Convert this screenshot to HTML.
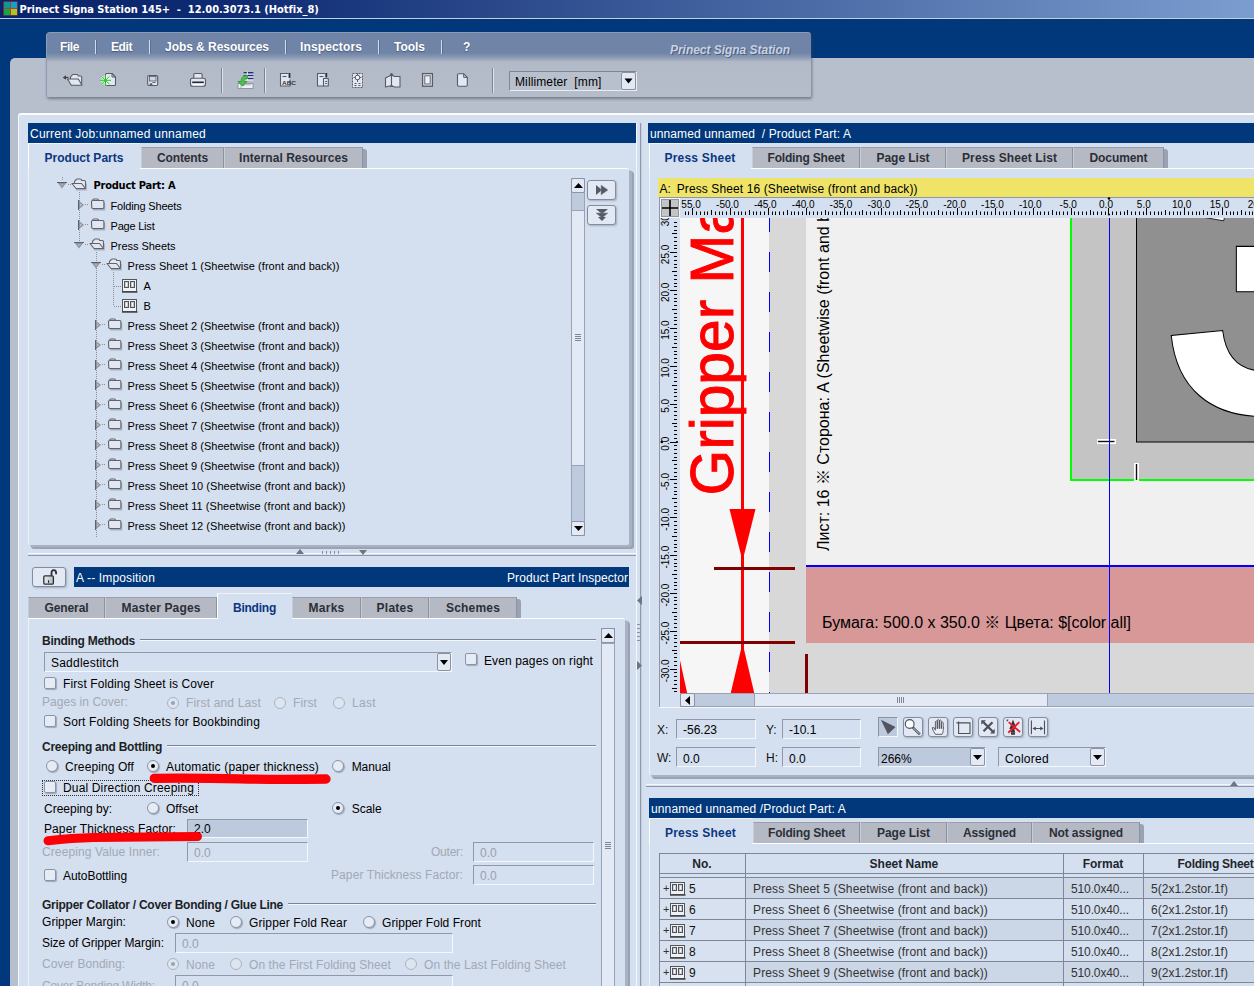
<!DOCTYPE html>
<html><head><meta charset="utf-8"><title>Prinect Signa Station</title>
<style>
html,body{margin:0;padding:0;}
body{width:1254px;height:986px;overflow:hidden;background:#00387b;font-family:"Liberation Sans",sans-serif;font-size:12px;}
#root{position:relative;width:1254px;height:986px;overflow:hidden;}
#root div,#root span.t,#root svg{position:absolute;box-sizing:border-box;}
span.t{white-space:pre;}
.hdr{background:#00387b;}
.tabi{background:#b5b9c3;border-top:1px solid #9a9eab;border-left:1px solid #c9ccd4;border-right:1px solid #8e929e;}
.inp{border:1px solid #8f98a8;border-bottom-color:#f4f7fb;border-right-color:#f4f7fb;background:#d4dfef;}
.btn{background:#e2e8f4;border:1px solid #858d9c;border-radius:3px;box-shadow:1px 1px 2px rgba(90,100,120,.4);}
.cb{width:12px;height:12px;background:#e6ecf6;border:1px solid #8d95a4;border-radius:2px;box-shadow:1px 1px 1px rgba(90,100,120,.45);}
.rb{width:12px;height:12px;background:#e6ecf6;border:1px solid #8d95a4;border-radius:50%;box-shadow:1px 1px 1px rgba(90,100,120,.45);}
.rb.on::after{content:"";position:absolute;left:3px;top:3px;width:4px;height:4px;border-radius:50%;background:#000;}
.dis.rb,.dis.cb{border-color:#aab3c2;background:#dde5f1;box-shadow:none;}
.dis.rb.on::after{background:#9aa3b2;}

</style></head>
<body>
<div id="root">
<div style="left:0px;top:0px;width:1254px;height:18px;background:linear-gradient(to right,#0a246a 0,#0d2a72 18%,#7b9dcf 100%);"></div>
<div style="left:0px;top:18px;width:1254px;height:1px;background:#c9cdd6;"></div>
<svg style="left:3px;top:1px" width="15" height="15" viewBox="0 0 15 15"><rect x="0.5" y="0.5" width="14" height="14" fill="#b04030"/><rect x="1" y="1" width="6" height="6" fill="#109890"/><rect x="8" y="1" width="6" height="6" fill="#10a0d0"/><rect x="1" y="8" width="6" height="6" fill="#10a848"/><rect x="8" y="8" width="6" height="6" fill="#a8c820"/></svg>
<span class="t" style="top:1.5px;font-size:11px;line-height:15px;color:#fff;font-family:'DejaVu Sans Condensed','DejaVu Sans',sans-serif;font-weight:bold;letter-spacing:-0.018px;left:19.5px;">Prinect Signa Station 145+  -  12.00.3073.1 (Hotfix_8)</span>
<div style="left:10px;top:58px;width:1250px;height:940px;background:#b8bfcc;border-radius:5px 0 0 0;"></div>
<div style="left:46px;top:32px;width:765px;height:65px;background:linear-gradient(to bottom,#6f84a7 0,#6f84a7 20px,#8f9db6 25px,#b3bac7 29px,#b6bdca 100%);border-radius:4px 3px 2px 2px;box-shadow:1px 2px 3px rgba(60,70,90,.55);border-top:1px solid #8a9bb8;border-left:1px solid #8d9cb7;"></div>
<span class="t" style="top:39.0px;font-size:12px;line-height:16px;color:#fff;font-weight:bold;letter-spacing:-0.418px;left:60px;text-shadow:0 1px 1px rgba(40,50,80,.5);">File</span>
<span class="t" style="top:39.0px;font-size:12px;line-height:16px;color:#fff;font-weight:bold;letter-spacing:-0.418px;left:111px;text-shadow:0 1px 1px rgba(40,50,80,.5);">Edit</span>
<span class="t" style="top:39.0px;font-size:12px;line-height:16px;color:#fff;font-weight:bold;letter-spacing:-0.045px;left:165px;text-shadow:0 1px 1px rgba(40,50,80,.5);">Jobs &amp; Resources</span>
<span class="t" style="top:39.0px;font-size:12px;line-height:16px;color:#fff;font-weight:bold;letter-spacing:0.131px;left:300px;text-shadow:0 1px 1px rgba(40,50,80,.5);">Inspectors</span>
<span class="t" style="top:39.0px;font-size:12px;line-height:16px;color:#fff;font-weight:bold;letter-spacing:-0.022px;left:394px;text-shadow:0 1px 1px rgba(40,50,80,.5);">Tools</span>
<span class="t" style="top:39.0px;font-size:12px;line-height:16px;color:#fff;font-weight:bold;left:463px;text-shadow:0 1px 1px rgba(40,50,80,.5);">?</span>
<div style="left:95px;top:40px;width:1px;height:14px;background:#d5dbe6;"></div>
<div style="left:96px;top:40px;width:1px;height:14px;background:#5c6f92;"></div>
<div style="left:149px;top:40px;width:1px;height:14px;background:#d5dbe6;"></div>
<div style="left:150px;top:40px;width:1px;height:14px;background:#5c6f92;"></div>
<div style="left:285px;top:40px;width:1px;height:14px;background:#d5dbe6;"></div>
<div style="left:286px;top:40px;width:1px;height:14px;background:#5c6f92;"></div>
<div style="left:378px;top:40px;width:1px;height:14px;background:#d5dbe6;"></div>
<div style="left:379px;top:40px;width:1px;height:14px;background:#5c6f92;"></div>
<div style="left:441px;top:40px;width:1px;height:14px;background:#d5dbe6;"></div>
<div style="left:442px;top:40px;width:1px;height:14px;background:#5c6f92;"></div>
<span class="t" style="top:42.0px;font-size:12px;line-height:16px;color:#c9d2e2;font-weight:bold;letter-spacing:-0.033px;left:670px;font-style:italic;text-shadow:1px 1px 0 rgba(50,60,90,.6);">Prinect Signa Station</span>
<div style="left:221px;top:68px;width:1px;height:25px;background:#7d8594;"></div>
<div style="left:222px;top:68px;width:1px;height:25px;background:#dfe3ea;"></div>
<div style="left:264px;top:68px;width:1px;height:25px;background:#7d8594;"></div>
<div style="left:265px;top:68px;width:1px;height:25px;background:#dfe3ea;"></div>
<div style="left:492px;top:68px;width:1px;height:25px;background:#7d8594;"></div>
<div style="left:493px;top:68px;width:1px;height:25px;background:#dfe3ea;"></div>
<svg style="left:56px;top:66px" width="424" height="30" viewBox="56 66 424 30"><path d="M62.800 77.500l3.200-2.300v4.600z" fill="#3c4048"/><path d="M65.500 77.500h3" stroke="#3c4048" stroke-width="1.200"/><path d="M70.500 79v-1.800q0-1.200 1.200-1.200q0-1.500 1.500-1.500h3.500q1.500 0 1.500 1.500h2.300q1.200 0 1.200 1.200v7" stroke="#565b66" fill="#e3e7f1" stroke-width="1.100" stroke-linejoin="round"/><path d="M67.500 79h10.800l3.700 6.300h-10.700z" stroke="#565b66" fill="#e3e7f1" stroke-width="1.100" stroke-linejoin="round"/><path d="M105.500 74.500q0-1 1-1h5.500l3.500 3.500v7.500q0 1-1 1h-8q-1 0-1-1z" stroke="#565b66" fill="#e3e7f1" stroke-width="1.100" stroke-linejoin="round"/><path d="M112 73.500v3.500h3.500" fill="none" stroke="#565b66" stroke-width="1"/><g stroke="#f2fff2" stroke-width="2.200" opacity=".7"><path d="M105.500 75v10.600M100.200 80.300h10.600M101.800 76.600l7.400 7.400M109.200 76.600l-7.400 7.400"/></g><g stroke="#22c322" stroke-width="1"><path d="M105.500 74.800v11M100 80.300h11M101.600 76.400l7.800 7.800M109.400 76.400l-7.800 7.800"/></g><rect x="147.700" y="75.500" width="10" height="10" rx="1.200" stroke="#565b66" fill="#e3e7f1" stroke-width="1.100" stroke-linejoin="round"/><rect x="149.500" y="76.500" width="6.500" height="4.500" fill="#cfd4df" stroke="#565b66" stroke-width=".8"/><rect x="149.700" y="83.300" width="2.600" height="2.200" fill="#565b66"/><path d="M152.500 82.500h3" stroke="#565b66" stroke-width=".9"/><path d="M193.800 78.500v-4q0-1 1-1h6.300q1 0 1 1v4" stroke="#565b66" fill="#e3e7f1" stroke-width="1.100" stroke-linejoin="round"/><rect x="190.500" y="78.300" width="15" height="8" rx="2" stroke="#565b66" fill="#e3e7f1" stroke-width="1.100" stroke-linejoin="round"/><path d="M192.200 82.300h11.600" stroke="#24272d" stroke-width="1.600"/><path d="M193 84.600h10" stroke="#fff" stroke-width="1.400"/><rect x="243.500" y="72" width="10" height="8.500" fill="#f4f6fa"/><path d="M243.500 72.800h10M243.500 75.600h10M243.500 78.400h10" stroke="#1c2f78" stroke-width="1.500"/><path d="M247.300 71.700v8.500" stroke="#f4f6fa" stroke-width="1"/><rect x="238" y="83.500" width="15" height="5" fill="#eef1f7" stroke="#8a909c" stroke-width=".9"/><path d="M241 83.500v4.500M251 84.800h-8" stroke="#a9aeb9" stroke-width=".9"/><path d="M247.500 75.300c-5.200 0-6.300 3.200-6.300 6.200h-3.200l4.600 4.700 4.300-4.700h-2.800c0-1.800.7-3 3.400-3z" fill="#4fc24f" stroke="#2f8a2f" stroke-width=".8" stroke-linejoin="round"/><path d="M288.500 73.500h-8v12.500h9.500v-6.500" stroke="#565b66" fill="#e3e7f1" stroke-width="1.100" stroke-linejoin="round"/><path d="M289.500 73v5" stroke="#2b2e35" stroke-width="1.800"/><path d="M282.500 76.500h4" stroke="#565b66" stroke-width="1.100"/><text x="282" y="85" font-family="Liberation Sans,sans-serif" font-size="6.200" font-weight="bold" fill="#33363d" textLength="14" lengthAdjust="spacingAndGlyphs">ABC</text><path d="M325 73.500h-7.500v12.500h6" stroke="#565b66" fill="#e3e7f1" stroke-width="1.100" stroke-linejoin="round"/><path d="M326.300 73v4.300" stroke="#2b2e35" stroke-width="1.800"/><path d="M319.500 76.500h4" stroke="#565b66" stroke-width="1.100"/><rect x="323.500" y="78.500" width="4.800" height="7.500" stroke="#565b66" fill="#e3e7f1" stroke-width="1.100" stroke-linejoin="round"/><path d="M325 81.500h2M325 83.500h2" stroke="#565b66" stroke-width=".9"/><rect x="352.500" y="73.500" width="10" height="14" fill="#e3e7f1" stroke="#565b66" stroke-width="1" stroke-dasharray="2 1"/><circle cx="357.500" cy="77.500" r="2.300" fill="#f6f8fb" stroke="#565b66" stroke-width="1"/><path d="M357.500 73.500v2M357.500 79.500v2.500M353.500 77.500h2M359.500 77.500h2M354.500 83.500h2M358.500 83.500h2M354.500 85.500h2M358.500 85.500h2" stroke="#565b66" stroke-width="1"/><path d="M385.500 78l6-3v10.500l-6 1.500z" stroke="#565b66" fill="#e3e7f1" stroke-width="1.100" stroke-linejoin="round"/><path d="M391.500 75l3 1.500h5.500v10.500h-5.500l-3-1.500z" stroke="#565b66" fill="#e3e7f1" stroke-width="1.100" stroke-linejoin="round"/><path d="M391.500 76v9.500" stroke="#565b66" stroke-width="1" stroke-dasharray="1.500 1.500"/><path d="M390 75l1.500-2 1.500 2zM390 86.500h3" stroke="#565b66" stroke-width=".8" fill="#565b66"/><rect x="422.600" y="73.600" width="9.800" height="12.600" fill="#e3e7f1" stroke="#565b66" stroke-width="1.300"/><rect x="424.800" y="75.800" width="5.400" height="8.200" fill="#eef1f7" stroke="#565b66" stroke-width=".9"/><path d="M457.500 75q0-1.200 1.200-1.200h5l3.600 3.600v7.600q0 1.200-1.200 1.200h-7.400q-1.200 0-1.200-1.200z" stroke="#565b66" fill="#e3e7f1" stroke-width="1.100" stroke-linejoin="round"/><path d="M463.700 73.800v3.600h3.600" fill="none" stroke="#565b66" stroke-width="1"/></svg>
<div style="left:509px;top:71px;width:128px;height:20px;background:#b9c0cd;border:1px solid #7e8695;border-right-color:#e8ecf2;border-bottom-color:#e8ecf2;"></div>
<span class="t" style="top:73.5px;font-size:12px;line-height:16px;color:#000;letter-spacing:0.114px;left:515px;">Millimeter  [mm]</span>
<div style="left:621px;top:72px;width:15px;height:18px;background:#e2e8f4;border:1px solid #8a92a2;border-radius:2px;"></div>
<svg style="left:624px;top:78px" width="9" height="6"><path d="M0.5 0.5h8l-4 5z" fill="#000"/></svg>
<div style="left:18px;top:113px;width:1240px;height:880px;background:#d4dfef;border-top:2px solid #fafcff;border-left:1px solid #f6f9fd;border-radius:3px 0 0 0;"></div>
<div style="left:28px;top:123px;width:608px;height:20px;background:#00387b;"></div>
<span class="t" style="top:125.8px;font-size:12px;line-height:16px;color:#fff;letter-spacing:0.242px;left:30px;">Current Job:unnamed unnamed</span>
<div style="left:31px;top:171px;width:603px;height:378px;background:#9aa3b4;border-radius:0 4px 3px 3px;"></div>
<div style="left:30px;top:170px;width:602px;height:377px;background:#a9b2c3;border-radius:0 4px 3px 3px;"></div>
<div style="left:28px;top:168px;width:601px;height:377px;background:#d4dfef;border-top:1px solid #fff;border-left:1px solid #eef3fa;border-radius:0 3px 2px 2px;"></div>
<div style="left:29px;top:168px;width:111px;height:1px;background:#d4dfef;"></div>
<div style="left:28px;top:143px;width:112px;height:26px;background:#d4dfef;border-left:1px solid #fff;border-top:1px solid #eef3fa;"></div>
<span class="t" style="top:149.5px;font-size:12px;line-height:16px;color:#0b3680;font-weight:bold;letter-spacing:0.024px;left:44.5px;">Product Parts</span>
<div class="tabi" style="left:141px;top:147px;width:83px;height:21px;"></div>
<span class="t" style="top:149.5px;font-size:12px;line-height:16px;color:#2b2f38;font-weight:bold;letter-spacing:-0.125px;left:157.0px;">Contents</span>
<div class="tabi" style="left:224px;top:147px;width:139px;height:21px;"></div>
<span class="t" style="top:149.5px;font-size:12px;line-height:16px;color:#2b2f38;font-weight:bold;letter-spacing:0.053px;left:239.0px;">Internal Resources</span>
<div style="left:363px;top:149px;width:4px;height:19px;background:#9aa3b4;border-radius:0 3px 0 0;"></div>
<div style="left:62px;top:177px;width:1px;height:4px;background:repeating-linear-gradient(to bottom,#8a909c 0,#8a909c 1px,transparent 1px,transparent 2px);"></div>
<div style="left:79px;top:192px;width:1px;height:51px;background:repeating-linear-gradient(to bottom,#8a909c 0,#8a909c 1px,transparent 1px,transparent 2px);"></div>
<div style="left:96px;top:252px;width:1px;height:285px;background:repeating-linear-gradient(to bottom,#8a909c 0,#8a909c 1px,transparent 1px,transparent 2px);"></div>
<div style="left:113px;top:272px;width:1px;height:34px;background:repeating-linear-gradient(to bottom,#8a909c 0,#8a909c 1px,transparent 1px,transparent 2px);"></div>
<svg style="left:57px;top:182px" width="10" height="7" viewBox="0 0 10 7"><path d="M0.500 0.500h9l-4.500 6z" fill="#8d929d"/><path d="M0 0.500h10" stroke="#5d616b" stroke-width="1"/><path d="M3.200 2h3.600l-1.800 2.500z" fill="#a8adb8"/></svg>
<svg style="left:70.5px;top:178px" width="17" height="13" viewBox="0 0 17 13"><path d="M5 11.800h10v-6" stroke="#a4adbf" stroke-width="1.400" fill="none"/><path d="M3.500 5v-1.300q0-1.200 1.200-1.200q0-1.500 1.500-1.500h3q1.500 0 1.500 1.500h2.600q1.200 0 1.200 1.200v6" fill="#e2e6f1" stroke="#5f636d" stroke-width="1.100"/><path d="M1 5.500h9.500l4 5h-9.500z" fill="#e2e6f1" stroke="#5f636d" stroke-width="1.100" stroke-linejoin="round"/></svg>
<div style="left:68px;top:184px;width:3px;height:1px;background:repeating-linear-gradient(to right,#8a909c 0,#8a909c 1px,transparent 1px,transparent 2px);"></div>
<span class="t" style="top:178.0px;font-size:11px;line-height:15px;color:#000;font-family:'DejaVu Sans Condensed','DejaVu Sans',sans-serif;font-weight:bold;letter-spacing:-0.228px;left:93.5px;">Product Part: A</span>
<svg style="left:78px;top:200px" width="7" height="10" viewBox="0 0 7 10"><path d="M0.500 0.500v9l5.500-4.500z" fill="#8d929d"/><path d="M0.500 0v10" stroke="#5d616b" stroke-width="1"/><path d="M2 3.200v3.600l2.200-1.800z" fill="#b9bec9"/></svg>
<svg style="left:90.0px;top:198px" width="16" height="13" viewBox="0 0 16 13"><path d="M3 11.700h11.500v-7" stroke="#a4adbf" stroke-width="1.400" fill="none"/><path d="M1.500 3.700q0-1.200 1.200-1.200q0-1.500 1.200-1.500h3.400q1.200 0 1.200 1.500h4.200q1.200 0 1.200 1.200v5.600q0 1.200-1.200 1.200h-9.800q-1.200 0-1.200-1.200z" fill="#e2e6f1" stroke="#5f636d" stroke-width="1.100"/><path d="M3 2.500h6" stroke="#5f636d" stroke-width="1"/></svg>
<div style="left:85px;top:204px;width:4px;height:1px;background:repeating-linear-gradient(to right,#8a909c 0,#8a909c 1px,transparent 1px,transparent 2px);"></div>
<span class="t" style="top:198.5px;font-size:11px;line-height:15px;color:#000;letter-spacing:-0.171px;left:110.5px;">Folding Sheets</span>
<svg style="left:78px;top:220px" width="7" height="10" viewBox="0 0 7 10"><path d="M0.500 0.500v9l5.500-4.500z" fill="#8d929d"/><path d="M0.500 0v10" stroke="#5d616b" stroke-width="1"/><path d="M2 3.200v3.600l2.200-1.800z" fill="#b9bec9"/></svg>
<svg style="left:90.0px;top:218px" width="16" height="13" viewBox="0 0 16 13"><path d="M3 11.700h11.500v-7" stroke="#a4adbf" stroke-width="1.400" fill="none"/><path d="M1.500 3.700q0-1.200 1.200-1.200q0-1.500 1.200-1.500h3.400q1.200 0 1.200 1.500h4.200q1.200 0 1.200 1.200v5.600q0 1.200-1.200 1.200h-9.800q-1.200 0-1.200-1.200z" fill="#e2e6f1" stroke="#5f636d" stroke-width="1.100"/><path d="M3 2.500h6" stroke="#5f636d" stroke-width="1"/></svg>
<div style="left:85px;top:224px;width:4px;height:1px;background:repeating-linear-gradient(to right,#8a909c 0,#8a909c 1px,transparent 1px,transparent 2px);"></div>
<span class="t" style="top:218.5px;font-size:11px;line-height:15px;color:#000;letter-spacing:-0.208px;left:110.5px;">Page List</span>
<svg style="left:74px;top:242px" width="10" height="7" viewBox="0 0 10 7"><path d="M0.500 0.500h9l-4.500 6z" fill="#8d929d"/><path d="M0 0.500h10" stroke="#5d616b" stroke-width="1"/><path d="M3.200 2h3.600l-1.800 2.500z" fill="#a8adb8"/></svg>
<svg style="left:89.0px;top:238px" width="17" height="13" viewBox="0 0 17 13"><path d="M5 11.800h10v-6" stroke="#a4adbf" stroke-width="1.400" fill="none"/><path d="M3.500 5v-1.300q0-1.200 1.200-1.200q0-1.500 1.500-1.500h3q1.500 0 1.500 1.500h2.600q1.200 0 1.200 1.200v6" fill="#e2e6f1" stroke="#5f636d" stroke-width="1.100"/><path d="M1 5.500h9.500l4 5h-9.500z" fill="#e2e6f1" stroke="#5f636d" stroke-width="1.100" stroke-linejoin="round"/></svg>
<div style="left:85px;top:244px;width:3px;height:1px;background:repeating-linear-gradient(to right,#8a909c 0,#8a909c 1px,transparent 1px,transparent 2px);"></div>
<span class="t" style="top:238.5px;font-size:11px;line-height:15px;color:#000;letter-spacing:-0.035px;left:110.5px;">Press Sheets</span>
<svg style="left:91px;top:262px" width="10" height="7" viewBox="0 0 10 7"><path d="M0.500 0.500h9l-4.500 6z" fill="#8d929d"/><path d="M0 0.500h10" stroke="#5d616b" stroke-width="1"/><path d="M3.200 2h3.600l-1.800 2.500z" fill="#a8adb8"/></svg>
<svg style="left:106.0px;top:258px" width="17" height="13" viewBox="0 0 17 13"><path d="M5 11.800h10v-6" stroke="#a4adbf" stroke-width="1.400" fill="none"/><path d="M3.500 5v-1.300q0-1.200 1.200-1.200q0-1.500 1.500-1.500h3q1.500 0 1.500 1.500h2.600q1.200 0 1.200 1.200v6" fill="#e2e6f1" stroke="#5f636d" stroke-width="1.100"/><path d="M1 5.500h9.500l4 5h-9.500z" fill="#e2e6f1" stroke="#5f636d" stroke-width="1.100" stroke-linejoin="round"/></svg>
<div style="left:102px;top:264px;width:3px;height:1px;background:repeating-linear-gradient(to right,#8a909c 0,#8a909c 1px,transparent 1px,transparent 2px);"></div>
<span class="t" style="top:258.5px;font-size:11px;line-height:15px;color:#000;letter-spacing:0.040px;left:127.5px;">Press Sheet 1 (Sheetwise (front and back))</span>
<div style="left:114px;top:286px;width:8px;height:1px;background:repeating-linear-gradient(to right,#8a909c 0,#8a909c 1px,transparent 1px,transparent 2px);"></div>
<svg style="left:122px;top:279px" width="16" height="14" viewBox="0 0 16 14"><rect x="0.500" y="0.500" width="14" height="12" fill="#eef2f8" stroke="#555"/><path d="M0 13h15.500" stroke="#444" stroke-width="1.500"/><rect x="2.500" y="2.500" width="4" height="6" fill="#c8ccd6" stroke="#555"/><rect x="8.500" y="2.500" width="4" height="6" fill="#c8ccd6" stroke="#555"/><path d="M4.500 4v3M10.500 4v3" stroke="#fff"/></svg>
<span class="t" style="top:278.5px;font-size:11px;line-height:15px;color:#000;letter-spacing:-0.344px;left:143.5px;">A</span>
<div style="left:114px;top:306px;width:8px;height:1px;background:repeating-linear-gradient(to right,#8a909c 0,#8a909c 1px,transparent 1px,transparent 2px);"></div>
<svg style="left:122px;top:299px" width="16" height="14" viewBox="0 0 16 14"><rect x="0.500" y="0.500" width="14" height="12" fill="#eef2f8" stroke="#555"/><path d="M0 13h15.500" stroke="#444" stroke-width="1.500"/><rect x="2.500" y="2.500" width="4" height="6" fill="#c8ccd6" stroke="#555"/><rect x="8.500" y="2.500" width="4" height="6" fill="#c8ccd6" stroke="#555"/><path d="M4.500 4v3M10.500 4v3" stroke="#fff"/></svg>
<span class="t" style="top:298.5px;font-size:11px;line-height:15px;color:#000;letter-spacing:-0.344px;left:143.5px;">B</span>
<svg style="left:95px;top:320px" width="7" height="10" viewBox="0 0 7 10"><path d="M0.500 0.500v9l5.500-4.500z" fill="#8d929d"/><path d="M0.500 0v10" stroke="#5d616b" stroke-width="1"/><path d="M2 3.200v3.600l2.200-1.800z" fill="#b9bec9"/></svg>
<svg style="left:107.0px;top:318px" width="16" height="13" viewBox="0 0 16 13"><path d="M3 11.700h11.500v-7" stroke="#a4adbf" stroke-width="1.400" fill="none"/><path d="M1.500 3.700q0-1.200 1.200-1.200q0-1.500 1.200-1.500h3.400q1.200 0 1.200 1.500h4.200q1.200 0 1.200 1.200v5.600q0 1.200-1.200 1.200h-9.800q-1.200 0-1.200-1.200z" fill="#e2e6f1" stroke="#5f636d" stroke-width="1.100"/><path d="M3 2.500h6" stroke="#5f636d" stroke-width="1"/></svg>
<div style="left:102px;top:324px;width:4px;height:1px;background:repeating-linear-gradient(to right,#8a909c 0,#8a909c 1px,transparent 1px,transparent 2px);"></div>
<span class="t" style="top:318.5px;font-size:11px;line-height:15px;color:#000;letter-spacing:0.040px;left:127.5px;">Press Sheet 2 (Sheetwise (front and back))</span>
<svg style="left:95px;top:340px" width="7" height="10" viewBox="0 0 7 10"><path d="M0.500 0.500v9l5.500-4.500z" fill="#8d929d"/><path d="M0.500 0v10" stroke="#5d616b" stroke-width="1"/><path d="M2 3.200v3.600l2.200-1.800z" fill="#b9bec9"/></svg>
<svg style="left:107.0px;top:338px" width="16" height="13" viewBox="0 0 16 13"><path d="M3 11.700h11.500v-7" stroke="#a4adbf" stroke-width="1.400" fill="none"/><path d="M1.500 3.700q0-1.200 1.200-1.200q0-1.500 1.200-1.500h3.400q1.200 0 1.200 1.500h4.200q1.200 0 1.200 1.200v5.600q0 1.200-1.200 1.200h-9.800q-1.200 0-1.200-1.200z" fill="#e2e6f1" stroke="#5f636d" stroke-width="1.100"/><path d="M3 2.500h6" stroke="#5f636d" stroke-width="1"/></svg>
<div style="left:102px;top:344px;width:4px;height:1px;background:repeating-linear-gradient(to right,#8a909c 0,#8a909c 1px,transparent 1px,transparent 2px);"></div>
<span class="t" style="top:338.5px;font-size:11px;line-height:15px;color:#000;letter-spacing:0.040px;left:127.5px;">Press Sheet 3 (Sheetwise (front and back))</span>
<svg style="left:95px;top:360px" width="7" height="10" viewBox="0 0 7 10"><path d="M0.500 0.500v9l5.500-4.500z" fill="#8d929d"/><path d="M0.500 0v10" stroke="#5d616b" stroke-width="1"/><path d="M2 3.200v3.600l2.200-1.800z" fill="#b9bec9"/></svg>
<svg style="left:107.0px;top:358px" width="16" height="13" viewBox="0 0 16 13"><path d="M3 11.700h11.500v-7" stroke="#a4adbf" stroke-width="1.400" fill="none"/><path d="M1.500 3.700q0-1.200 1.200-1.200q0-1.500 1.200-1.500h3.400q1.200 0 1.200 1.500h4.200q1.200 0 1.200 1.200v5.600q0 1.200-1.200 1.200h-9.800q-1.200 0-1.200-1.200z" fill="#e2e6f1" stroke="#5f636d" stroke-width="1.100"/><path d="M3 2.500h6" stroke="#5f636d" stroke-width="1"/></svg>
<div style="left:102px;top:364px;width:4px;height:1px;background:repeating-linear-gradient(to right,#8a909c 0,#8a909c 1px,transparent 1px,transparent 2px);"></div>
<span class="t" style="top:358.5px;font-size:11px;line-height:15px;color:#000;letter-spacing:0.040px;left:127.5px;">Press Sheet 4 (Sheetwise (front and back))</span>
<svg style="left:95px;top:380px" width="7" height="10" viewBox="0 0 7 10"><path d="M0.500 0.500v9l5.500-4.500z" fill="#8d929d"/><path d="M0.500 0v10" stroke="#5d616b" stroke-width="1"/><path d="M2 3.200v3.600l2.200-1.800z" fill="#b9bec9"/></svg>
<svg style="left:107.0px;top:378px" width="16" height="13" viewBox="0 0 16 13"><path d="M3 11.700h11.500v-7" stroke="#a4adbf" stroke-width="1.400" fill="none"/><path d="M1.500 3.700q0-1.200 1.200-1.200q0-1.500 1.200-1.500h3.400q1.200 0 1.200 1.500h4.200q1.200 0 1.200 1.200v5.600q0 1.200-1.200 1.200h-9.800q-1.200 0-1.200-1.200z" fill="#e2e6f1" stroke="#5f636d" stroke-width="1.100"/><path d="M3 2.500h6" stroke="#5f636d" stroke-width="1"/></svg>
<div style="left:102px;top:384px;width:4px;height:1px;background:repeating-linear-gradient(to right,#8a909c 0,#8a909c 1px,transparent 1px,transparent 2px);"></div>
<span class="t" style="top:378.5px;font-size:11px;line-height:15px;color:#000;letter-spacing:0.040px;left:127.5px;">Press Sheet 5 (Sheetwise (front and back))</span>
<svg style="left:95px;top:400px" width="7" height="10" viewBox="0 0 7 10"><path d="M0.500 0.500v9l5.500-4.500z" fill="#8d929d"/><path d="M0.500 0v10" stroke="#5d616b" stroke-width="1"/><path d="M2 3.200v3.600l2.200-1.800z" fill="#b9bec9"/></svg>
<svg style="left:107.0px;top:398px" width="16" height="13" viewBox="0 0 16 13"><path d="M3 11.700h11.500v-7" stroke="#a4adbf" stroke-width="1.400" fill="none"/><path d="M1.500 3.700q0-1.200 1.200-1.200q0-1.500 1.200-1.500h3.400q1.200 0 1.200 1.500h4.200q1.200 0 1.200 1.200v5.600q0 1.200-1.200 1.200h-9.800q-1.200 0-1.200-1.200z" fill="#e2e6f1" stroke="#5f636d" stroke-width="1.100"/><path d="M3 2.500h6" stroke="#5f636d" stroke-width="1"/></svg>
<div style="left:102px;top:404px;width:4px;height:1px;background:repeating-linear-gradient(to right,#8a909c 0,#8a909c 1px,transparent 1px,transparent 2px);"></div>
<span class="t" style="top:398.5px;font-size:11px;line-height:15px;color:#000;letter-spacing:0.040px;left:127.5px;">Press Sheet 6 (Sheetwise (front and back))</span>
<svg style="left:95px;top:420px" width="7" height="10" viewBox="0 0 7 10"><path d="M0.500 0.500v9l5.500-4.500z" fill="#8d929d"/><path d="M0.500 0v10" stroke="#5d616b" stroke-width="1"/><path d="M2 3.200v3.600l2.200-1.800z" fill="#b9bec9"/></svg>
<svg style="left:107.0px;top:418px" width="16" height="13" viewBox="0 0 16 13"><path d="M3 11.700h11.500v-7" stroke="#a4adbf" stroke-width="1.400" fill="none"/><path d="M1.500 3.700q0-1.200 1.200-1.200q0-1.500 1.200-1.500h3.400q1.200 0 1.200 1.500h4.200q1.200 0 1.200 1.200v5.600q0 1.200-1.200 1.200h-9.800q-1.200 0-1.200-1.200z" fill="#e2e6f1" stroke="#5f636d" stroke-width="1.100"/><path d="M3 2.500h6" stroke="#5f636d" stroke-width="1"/></svg>
<div style="left:102px;top:424px;width:4px;height:1px;background:repeating-linear-gradient(to right,#8a909c 0,#8a909c 1px,transparent 1px,transparent 2px);"></div>
<span class="t" style="top:418.5px;font-size:11px;line-height:15px;color:#000;letter-spacing:0.040px;left:127.5px;">Press Sheet 7 (Sheetwise (front and back))</span>
<svg style="left:95px;top:440px" width="7" height="10" viewBox="0 0 7 10"><path d="M0.500 0.500v9l5.500-4.500z" fill="#8d929d"/><path d="M0.500 0v10" stroke="#5d616b" stroke-width="1"/><path d="M2 3.200v3.600l2.200-1.800z" fill="#b9bec9"/></svg>
<svg style="left:107.0px;top:438px" width="16" height="13" viewBox="0 0 16 13"><path d="M3 11.700h11.500v-7" stroke="#a4adbf" stroke-width="1.400" fill="none"/><path d="M1.500 3.700q0-1.200 1.200-1.200q0-1.500 1.200-1.500h3.400q1.200 0 1.200 1.500h4.200q1.200 0 1.200 1.200v5.600q0 1.200-1.200 1.200h-9.800q-1.200 0-1.200-1.200z" fill="#e2e6f1" stroke="#5f636d" stroke-width="1.100"/><path d="M3 2.500h6" stroke="#5f636d" stroke-width="1"/></svg>
<div style="left:102px;top:444px;width:4px;height:1px;background:repeating-linear-gradient(to right,#8a909c 0,#8a909c 1px,transparent 1px,transparent 2px);"></div>
<span class="t" style="top:438.5px;font-size:11px;line-height:15px;color:#000;letter-spacing:0.040px;left:127.5px;">Press Sheet 8 (Sheetwise (front and back))</span>
<svg style="left:95px;top:460px" width="7" height="10" viewBox="0 0 7 10"><path d="M0.500 0.500v9l5.500-4.500z" fill="#8d929d"/><path d="M0.500 0v10" stroke="#5d616b" stroke-width="1"/><path d="M2 3.200v3.600l2.200-1.800z" fill="#b9bec9"/></svg>
<svg style="left:107.0px;top:458px" width="16" height="13" viewBox="0 0 16 13"><path d="M3 11.700h11.500v-7" stroke="#a4adbf" stroke-width="1.400" fill="none"/><path d="M1.500 3.700q0-1.200 1.200-1.200q0-1.500 1.200-1.500h3.400q1.200 0 1.200 1.500h4.200q1.200 0 1.200 1.200v5.600q0 1.200-1.200 1.200h-9.800q-1.200 0-1.200-1.200z" fill="#e2e6f1" stroke="#5f636d" stroke-width="1.100"/><path d="M3 2.500h6" stroke="#5f636d" stroke-width="1"/></svg>
<div style="left:102px;top:464px;width:4px;height:1px;background:repeating-linear-gradient(to right,#8a909c 0,#8a909c 1px,transparent 1px,transparent 2px);"></div>
<span class="t" style="top:458.5px;font-size:11px;line-height:15px;color:#000;letter-spacing:0.040px;left:127.5px;">Press Sheet 9 (Sheetwise (front and back))</span>
<svg style="left:95px;top:480px" width="7" height="10" viewBox="0 0 7 10"><path d="M0.500 0.500v9l5.500-4.500z" fill="#8d929d"/><path d="M0.500 0v10" stroke="#5d616b" stroke-width="1"/><path d="M2 3.200v3.600l2.200-1.800z" fill="#b9bec9"/></svg>
<svg style="left:107.0px;top:478px" width="16" height="13" viewBox="0 0 16 13"><path d="M3 11.700h11.500v-7" stroke="#a4adbf" stroke-width="1.400" fill="none"/><path d="M1.500 3.700q0-1.200 1.200-1.200q0-1.500 1.200-1.500h3.400q1.200 0 1.200 1.500h4.200q1.200 0 1.200 1.200v5.600q0 1.200-1.200 1.200h-9.800q-1.200 0-1.200-1.200z" fill="#e2e6f1" stroke="#5f636d" stroke-width="1.100"/><path d="M3 2.500h6" stroke="#5f636d" stroke-width="1"/></svg>
<div style="left:102px;top:484px;width:4px;height:1px;background:repeating-linear-gradient(to right,#8a909c 0,#8a909c 1px,transparent 1px,transparent 2px);"></div>
<span class="t" style="top:478.5px;font-size:11px;line-height:15px;color:#000;letter-spacing:0.036px;left:127.5px;">Press Sheet 10 (Sheetwise (front and back))</span>
<svg style="left:95px;top:500px" width="7" height="10" viewBox="0 0 7 10"><path d="M0.500 0.500v9l5.500-4.500z" fill="#8d929d"/><path d="M0.500 0v10" stroke="#5d616b" stroke-width="1"/><path d="M2 3.200v3.600l2.200-1.800z" fill="#b9bec9"/></svg>
<svg style="left:107.0px;top:498px" width="16" height="13" viewBox="0 0 16 13"><path d="M3 11.700h11.500v-7" stroke="#a4adbf" stroke-width="1.400" fill="none"/><path d="M1.500 3.700q0-1.200 1.200-1.200q0-1.500 1.200-1.500h3.400q1.200 0 1.200 1.500h4.200q1.200 0 1.200 1.200v5.600q0 1.200-1.200 1.200h-9.800q-1.200 0-1.200-1.200z" fill="#e2e6f1" stroke="#5f636d" stroke-width="1.100"/><path d="M3 2.500h6" stroke="#5f636d" stroke-width="1"/></svg>
<div style="left:102px;top:504px;width:4px;height:1px;background:repeating-linear-gradient(to right,#8a909c 0,#8a909c 1px,transparent 1px,transparent 2px);"></div>
<span class="t" style="top:498.5px;font-size:11px;line-height:15px;color:#000;letter-spacing:0.055px;left:127.5px;">Press Sheet 11 (Sheetwise (front and back))</span>
<svg style="left:95px;top:520px" width="7" height="10" viewBox="0 0 7 10"><path d="M0.500 0.500v9l5.500-4.500z" fill="#8d929d"/><path d="M0.500 0v10" stroke="#5d616b" stroke-width="1"/><path d="M2 3.200v3.600l2.200-1.800z" fill="#b9bec9"/></svg>
<svg style="left:107.0px;top:518px" width="16" height="13" viewBox="0 0 16 13"><path d="M3 11.700h11.500v-7" stroke="#a4adbf" stroke-width="1.400" fill="none"/><path d="M1.500 3.700q0-1.200 1.200-1.200q0-1.500 1.200-1.500h3.400q1.200 0 1.200 1.500h4.200q1.200 0 1.200 1.200v5.600q0 1.200-1.200 1.200h-9.800q-1.200 0-1.200-1.200z" fill="#e2e6f1" stroke="#5f636d" stroke-width="1.100"/><path d="M3 2.500h6" stroke="#5f636d" stroke-width="1"/></svg>
<div style="left:102px;top:524px;width:4px;height:1px;background:repeating-linear-gradient(to right,#8a909c 0,#8a909c 1px,transparent 1px,transparent 2px);"></div>
<span class="t" style="top:518.5px;font-size:11px;line-height:15px;color:#000;letter-spacing:0.036px;left:127.5px;">Press Sheet 12 (Sheetwise (front and back))</span>
<div style="left:571px;top:178px;width:14px;height:358px;background:#becadd;border:1px solid #9aa3b4;"></div>
<div style="left:571px;top:210px;width:14px;height:256px;background:#e3e9f5;border:1px solid #9aa3b4;"></div>
<div style="left:575px;top:334px;width:6px;height:1px;background:#7f8796;"></div>
<div style="left:575px;top:336px;width:6px;height:1px;background:#7f8796;"></div>
<div style="left:575px;top:338px;width:6px;height:1px;background:#7f8796;"></div>
<div style="left:575px;top:340px;width:6px;height:1px;background:#7f8796;"></div>
<div style="left:571px;top:178px;width:14px;height:15px;background:#e3e9f5;border:1px solid #8a93a4;border-radius:2px;"></div>
<svg style="left:574px;top:183px" width="9" height="5"><path d="M0 5h9l-4.500-5z" fill="#000"/></svg>
<div style="left:571px;top:521px;width:14px;height:15px;background:#e3e9f5;border:1px solid #8a93a4;border-radius:2px;"></div>
<svg style="left:574px;top:526px" width="9" height="5"><path d="M0 0h9l-4.500 5z" fill="#000"/></svg>
<div class="btn" style="left:587px;top:180px;width:29px;height:20px;"></div>
<svg style="left:595px;top:184px" width="14" height="12" viewBox="0 0 14 12"><path d="M1 1l6 5-6 5z" fill="#555b66"/><path d="M6 1l7 5-7 5z" fill="#555b66" stroke="#8a909c" stroke-width=".5"/></svg>
<div class="btn" style="left:587px;top:205px;width:29px;height:20px;"></div>
<svg style="left:595px;top:208px" width="14" height="14" viewBox="0 0 14 14"><path d="M1 1h12l-6 5z" fill="#555b66"/><path d="M1 5h12l-6 5z" fill="#555b66" stroke="#8a909c" stroke-width=".5"/><path d="M3 9h8l-4 4z" fill="#555b66"/></svg>
<div class="btn" style="left:32px;top:567px;width:34px;height:20px;"></div>
<svg style="left:40px;top:567px" width="20" height="20" viewBox="0 0 20 20"><defs><linearGradient id="lkg" x1="0" y1="0" x2="1" y2="0"><stop offset="0" stop-color="#ecedf0"/><stop offset="1" stop-color="#b4b8c1"/></linearGradient></defs><path d="M11.500 8.700v-2.700q0-2.800 2.300-2.800q2.300 0 2.300 2.800v1.300" fill="none" stroke="#2b2e35" stroke-width="1.800"/><rect x="3.800" y="8.800" width="9.600" height="8.400" rx="1.200" fill="url(#lkg)" stroke="#2b2e35" stroke-width="1.300"/><rect x="8" y="13.200" width="1.100" height="2.700" fill="#2b2e35"/></svg>
<div style="left:74px;top:567px;width:555px;height:20px;background:#00387b;"></div>
<span class="t" style="top:569.8px;font-size:12px;line-height:16px;color:#fff;letter-spacing:0.153px;left:76px;">A -- Imposition</span>
<span class="t" style="top:569.8px;font-size:12px;line-height:16px;color:#fff;letter-spacing:0.073px;left:507.0px;">Product Part Inspector</span>
<div style="left:31px;top:621px;width:599px;height:383px;background:#9aa3b4;border-radius:0 4px 3px 3px;"></div>
<div style="left:30px;top:620px;width:598px;height:382px;background:#a9b2c3;border-radius:0 4px 3px 3px;"></div>
<div style="left:28px;top:618px;width:597px;height:382px;background:#d4dfef;border-top:1px solid #fff;border-left:1px solid #eef3fa;border-radius:0 3px 2px 2px;"></div>
<div style="left:218px;top:618px;width:74px;height:1px;background:#d4dfef;"></div>
<div class="tabi" style="left:28px;top:597px;width:77px;height:21px;"></div>
<span class="t" style="top:599.5px;font-size:12px;line-height:16px;color:#2b2f38;font-weight:bold;letter-spacing:-0.100px;left:44.5px;">General</span>
<div class="tabi" style="left:105px;top:597px;width:112px;height:21px;"></div>
<span class="t" style="top:599.5px;font-size:12px;line-height:16px;color:#2b2f38;font-weight:bold;letter-spacing:0.135px;left:121.5px;">Master Pages</span>
<div style="left:217px;top:593px;width:75px;height:26px;background:#d4dfef;border-left:1px solid #fff;border-top:1px solid #eef3fa;"></div>
<span class="t" style="top:599.5px;font-size:12px;line-height:16px;color:#0b3680;font-weight:bold;letter-spacing:-0.237px;left:233.0px;">Binding</span>
<div class="tabi" style="left:292px;top:597px;width:69px;height:21px;"></div>
<span class="t" style="top:599.5px;font-size:12px;line-height:16px;color:#2b2f38;font-weight:bold;letter-spacing:0.263px;left:308.5px;">Marks</span>
<div class="tabi" style="left:361px;top:597px;width:68px;height:21px;"></div>
<span class="t" style="top:599.5px;font-size:12px;line-height:16px;color:#2b2f38;font-weight:bold;letter-spacing:0.273px;left:376.5px;">Plates</span>
<div class="tabi" style="left:429px;top:597px;width:88px;height:21px;"></div>
<span class="t" style="top:599.5px;font-size:12px;line-height:16px;color:#2b2f38;font-weight:bold;letter-spacing:0.185px;left:446.0px;">Schemes</span>
<div style="left:517px;top:599px;width:4px;height:19px;background:#9aa3b4;border-radius:0 3px 0 0;"></div>
<div style="left:601px;top:628px;width:14px;height:382px;background:#becadd;border:1px solid #9aa3b4;"></div>
<div style="left:601px;top:643px;width:14px;height:407px;background:#e3e9f5;border:1px solid #9aa3b4;"></div>
<div style="left:605px;top:842px;width:6px;height:1px;background:#7f8796;"></div>
<div style="left:605px;top:844px;width:6px;height:1px;background:#7f8796;"></div>
<div style="left:605px;top:846px;width:6px;height:1px;background:#7f8796;"></div>
<div style="left:605px;top:848px;width:6px;height:1px;background:#7f8796;"></div>
<div style="left:601px;top:628px;width:14px;height:15px;background:#e3e9f5;border:1px solid #8a93a4;border-radius:2px;"></div>
<svg style="left:604px;top:633px" width="9" height="5"><path d="M0 5h9l-4.500-5z" fill="#000"/></svg>
<div style="left:601px;top:995px;width:14px;height:15px;background:#e3e9f5;border:1px solid #8a93a4;border-radius:2px;"></div>
<svg style="left:604px;top:1000px" width="9" height="5"><path d="M0 0h9l-4.500 5z" fill="#000"/></svg>
<span class="t" style="top:632.5px;font-size:12px;line-height:16px;color:#1c1f26;font-weight:bold;letter-spacing:-0.289px;left:42px;">Binding Methods</span>
<div style="left:140px;top:638.5px;width:456px;height:1px;background:#7c8494;"></div>
<div style="left:140px;top:639.5px;width:456px;height:1px;background:#f4f7fb;"></div>
<div class="inp" style="left:44px;top:652px;width:408px;height:20px;"></div>
<span class="t" style="top:654.5px;font-size:12px;line-height:16px;color:#000;letter-spacing:0.219px;left:51px;">Saddlestitch</span>
<div style="left:437px;top:653px;width:14px;height:18px;background:#e3e9f5;border:1px solid #8a93a4;border-radius:2px;"></div>
<svg style="left:440px;top:660px" width="8" height="5"><path d="M0 0h8l-4 5z" fill="#000"/></svg>
<div class="cb" style="left:465px;top:653px;width:12px;height:12px;"></div>
<span class="t" style="top:652.5px;font-size:12px;line-height:16px;color:#000;letter-spacing:0.118px;left:484px;">Even pages on right</span>
<div class="cb" style="left:44px;top:676.5px;width:12px;height:12px;"></div>
<span class="t" style="top:675.5px;font-size:12px;line-height:16px;color:#000;letter-spacing:0.105px;left:63px;">First Folding Sheet is Cover</span>
<span class="t" style="top:694.0px;font-size:12px;line-height:16px;color:#a2a9b5;letter-spacing:0.041px;left:42px;">Pages in Cover:</span>
<div class="rb on dis" style="left:167px;top:696.5px;width:12px;height:12px;"></div>
<span class="t" style="top:695.0px;font-size:12px;line-height:16px;color:#a2a9b5;letter-spacing:0.164px;left:186px;">First and Last</span>
<div class="rb dis" style="left:274px;top:696.5px;width:12px;height:12px;"></div>
<span class="t" style="top:695.0px;font-size:12px;line-height:16px;color:#a2a9b5;letter-spacing:0.134px;left:293px;">First</span>
<div class="rb dis" style="left:333px;top:696.5px;width:12px;height:12px;"></div>
<span class="t" style="top:695.0px;font-size:12px;line-height:16px;color:#a2a9b5;letter-spacing:0.328px;left:352px;">Last</span>
<div class="cb" style="left:44px;top:714.5px;width:12px;height:12px;"></div>
<span class="t" style="top:713.5px;font-size:12px;line-height:16px;color:#000;letter-spacing:0.139px;left:63px;">Sort Folding Sheets for Bookbinding</span>
<span class="t" style="top:738.5px;font-size:12px;line-height:16px;color:#1c1f26;font-weight:bold;letter-spacing:-0.254px;left:42px;">Creeping and Bottling</span>
<div style="left:167px;top:744.5px;width:429px;height:1px;background:#7c8494;"></div>
<div style="left:167px;top:745.5px;width:429px;height:1px;background:#f4f7fb;"></div>
<div class="rb" style="left:46px;top:759.5px;width:12px;height:12px;"></div>
<span class="t" style="top:758.5px;font-size:12px;line-height:16px;color:#000;letter-spacing:0.098px;left:65px;">Creeping Off</span>
<div class="rb on" style="left:147px;top:759.5px;width:12px;height:12px;"></div>
<span class="t" style="top:758.5px;font-size:12px;line-height:16px;color:#000;letter-spacing:0.158px;left:166px;">Automatic (paper thickness)</span>
<div class="rb" style="left:332px;top:759.5px;width:12px;height:12px;"></div>
<span class="t" style="top:758.5px;font-size:12px;line-height:16px;color:#000;letter-spacing:-0.060px;left:351.7px;">Manual</span>
<div class="cb" style="left:44px;top:780.5px;width:12px;height:12px;"></div>
<span class="t" style="top:779.5px;font-size:12px;line-height:16px;color:#000;letter-spacing:0.156px;left:63px;">Dual Direction Creeping</span>
<div style="left:42px;top:780px;width:157px;height:16px;border:1px dotted #333;"></div>
<span class="t" style="top:800.5px;font-size:12px;line-height:16px;color:#000;left:44px;">Creeping by:</span>
<div class="rb" style="left:147px;top:802.0px;width:12px;height:12px;"></div>
<span class="t" style="top:800.5px;font-size:12px;line-height:16px;color:#000;letter-spacing:0.034px;left:166px;">Offset</span>
<div class="rb on" style="left:332px;top:802.0px;width:12px;height:12px;"></div>
<span class="t" style="top:800.5px;font-size:12px;line-height:16px;color:#000;letter-spacing:-0.006px;left:351.7px;">Scale</span>
<span class="t" style="top:820.5px;font-size:12px;line-height:16px;color:#000;letter-spacing:0.094px;left:44px;">Paper Thickness Factor:</span>
<div class="inp" style="left:187px;top:819px;width:121px;height:19px;background:#bdc9dc;"></div>
<span class="t" style="top:821.0px;font-size:12px;line-height:16px;color:#000;left:194px;">2.0</span>
<span class="t" style="top:844.0px;font-size:12px;line-height:16px;color:#a2a9b5;letter-spacing:0.102px;left:42px;">Creeping Value Inner:</span>
<div class="inp" style="left:187px;top:842px;width:121px;height:20px;"></div>
<span class="t" style="top:844.5px;font-size:12px;line-height:16px;color:#98a1b0;left:194px;">0.0</span>
<span class="t" style="top:844.0px;font-size:12px;line-height:16px;color:#a2a9b5;letter-spacing:-0.227px;left:431.0px;">Outer:</span>
<div class="inp" style="left:473px;top:842px;width:121px;height:20px;"></div>
<span class="t" style="top:844.5px;font-size:12px;line-height:16px;color:#98a1b0;left:480px;">0.0</span>
<div class="cb" style="left:44px;top:868.5px;width:12px;height:12px;"></div>
<span class="t" style="top:867.5px;font-size:12px;line-height:16px;color:#000;letter-spacing:-0.060px;left:63px;">AutoBottling</span>
<span class="t" style="top:866.5px;font-size:12px;line-height:16px;color:#a2a9b5;letter-spacing:0.094px;left:331.0px;">Paper Thickness Factor:</span>
<div class="inp" style="left:473px;top:865px;width:121px;height:20px;"></div>
<span class="t" style="top:867.5px;font-size:12px;line-height:16px;color:#98a1b0;left:480px;">0.0</span>
<span class="t" style="top:896.5px;font-size:12px;line-height:16px;color:#1c1f26;font-weight:bold;letter-spacing:-0.266px;left:42px;">Gripper Collator / Cover Bonding / Glue Line</span>
<div style="left:288px;top:902.5px;width:308px;height:1px;background:#7c8494;"></div>
<div style="left:288px;top:903.5px;width:308px;height:1px;background:#f4f7fb;"></div>
<span class="t" style="top:914.0px;font-size:12px;line-height:16px;color:#000;letter-spacing:0.042px;left:42px;">Gripper Margin:</span>
<div class="rb on" style="left:167px;top:915.5px;width:12px;height:12px;"></div>
<span class="t" style="top:914.5px;font-size:12px;line-height:16px;color:#000;letter-spacing:0.078px;left:186px;">None</span>
<div class="rb" style="left:230px;top:915.5px;width:12px;height:12px;"></div>
<span class="t" style="top:914.5px;font-size:12px;line-height:16px;color:#000;letter-spacing:0.115px;left:249px;">Gripper Fold Rear</span>
<div class="rb" style="left:363px;top:915.5px;width:12px;height:12px;"></div>
<span class="t" style="top:914.5px;font-size:12px;line-height:16px;color:#000;letter-spacing:0.053px;left:382px;">Gripper Fold Front</span>
<span class="t" style="top:934.5px;font-size:12px;line-height:16px;color:#000;letter-spacing:-0.060px;left:42px;">Size of Gripper Margin:</span>
<div class="inp" style="left:175px;top:933px;width:278px;height:20px;"></div>
<span class="t" style="top:935.5px;font-size:12px;line-height:16px;color:#98a1b0;left:182px;">0.0</span>
<span class="t" style="top:956.0px;font-size:12px;line-height:16px;color:#a2a9b5;letter-spacing:0.020px;left:42px;">Cover Bonding:</span>
<div class="rb on dis" style="left:167px;top:958.0px;width:12px;height:12px;"></div>
<span class="t" style="top:956.5px;font-size:12px;line-height:16px;color:#a2a9b5;letter-spacing:0.078px;left:186px;">None</span>
<div class="rb dis" style="left:230px;top:958.0px;width:12px;height:12px;"></div>
<span class="t" style="top:956.5px;font-size:12px;line-height:16px;color:#a2a9b5;letter-spacing:0.074px;left:249px;">On the First Folding Sheet</span>
<div class="rb dis" style="left:405px;top:958.0px;width:12px;height:12px;"></div>
<span class="t" style="top:956.5px;font-size:12px;line-height:16px;color:#a2a9b5;letter-spacing:0.102px;left:424px;">On the Last Folding Sheet</span>
<span class="t" style="top:977.5px;font-size:12px;line-height:16px;color:#a2a9b5;letter-spacing:-0.187px;left:42px;">Cover Bonding Width:</span>
<div class="inp" style="left:175px;top:975px;width:278px;height:20px;"></div>
<span class="t" style="top:977.5px;font-size:12px;line-height:16px;color:#98a1b0;left:182px;">0.0</span>
<svg style="left:140px;top:765px" width="200" height="24" viewBox="0 0 200 24"><path d="M14.300 13.300 Q 60 12.900 100 13.900 T 186 14" fill="none" stroke="#fb0007" stroke-width="9.300" stroke-linecap="round"/></svg>
<svg style="left:36px;top:826px" width="180" height="24" viewBox="0 0 180 24"><path d="M12 14.700 C 25 13.200 40 11.800 57 11.400 S 110 10.900 161.500 10.500" fill="none" stroke="#fb0007" stroke-width="9" stroke-linecap="round"/></svg>
<div style="left:28px;top:553px;width:609px;height:1px;background:#f4f7fb;"></div>
<div style="left:28px;top:555px;width:609px;height:1px;background:#8f97a7;"></div>
<svg style="left:296px;top:549px" width="8" height="5"><path d="M0 5h8l-4-5z" fill="#6d7482"/></svg>
<svg style="left:359px;top:550px" width="8" height="5"><path d="M0 0h8l-4 5z" fill="#6d7482"/></svg>
<div style="left:322px;top:551px;width:1px;height:3px;background:#8a92a1;"></div>
<div style="left:326px;top:551px;width:1px;height:3px;background:#8a92a1;"></div>
<div style="left:330px;top:551px;width:1px;height:3px;background:#8a92a1;"></div>
<div style="left:334px;top:551px;width:1px;height:3px;background:#8a92a1;"></div>
<div style="left:338px;top:551px;width:1px;height:3px;background:#8a92a1;"></div>
<div style="left:636px;top:123px;width:1px;height:880px;background:#f4f7fb;"></div>
<div style="left:640px;top:123px;width:1px;height:880px;background:#9199a9;"></div>
<div style="left:641px;top:123px;width:1px;height:880px;background:#c3cddf;"></div>
<svg style="left:637px;top:596px" width="5" height="9"><path d="M5 0v9l-5-4.500z" fill="#6d7482"/></svg>
<svg style="left:637px;top:661px" width="5" height="9"><path d="M0 0v9l5-4.500z" fill="#6d7482"/></svg>
<div style="left:637px;top:624px;width:4px;height:1px;background:#8a92a1;"></div>
<div style="left:637px;top:628px;width:4px;height:1px;background:#8a92a1;"></div>
<div style="left:637px;top:632px;width:4px;height:1px;background:#8a92a1;"></div>
<div style="left:637px;top:636px;width:4px;height:1px;background:#8a92a1;"></div>
<div style="left:637px;top:640px;width:4px;height:1px;background:#8a92a1;"></div>
<div style="left:648px;top:123px;width:620px;height:20px;background:#00387b;"></div>
<span class="t" style="top:125.8px;font-size:12px;line-height:16px;color:#fff;letter-spacing:0.104px;left:650px;">unnamed unnamed  / Product Part: A</span>
<div style="left:652px;top:171px;width:653px;height:608px;background:#9aa3b4;border-radius:0 4px 3px 3px;"></div>
<div style="left:651px;top:170px;width:652px;height:607px;background:#a9b2c3;border-radius:0 4px 3px 3px;"></div>
<div style="left:649px;top:168px;width:651px;height:607px;background:#d4dfef;border-top:1px solid #fff;border-left:1px solid #eef3fa;border-radius:0 3px 2px 2px;"></div>
<div style="left:650px;top:168px;width:101px;height:1px;background:#d4dfef;"></div>
<div style="left:649px;top:143px;width:102px;height:26px;background:#d4dfef;border-left:1px solid #fff;border-top:1px solid #eef3fa;"></div>
<span class="t" style="top:149.5px;font-size:12px;line-height:16px;color:#0b3680;font-weight:bold;letter-spacing:0.207px;left:664.5px;">Press Sheet</span>
<div class="tabi" style="left:752px;top:147px;width:108px;height:21px;"></div>
<span class="t" style="top:149.5px;font-size:12px;line-height:16px;color:#2b2f38;font-weight:bold;letter-spacing:-0.180px;left:767.5px;">Folding Sheet</span>
<div class="tabi" style="left:860px;top:147px;width:86px;height:21px;"></div>
<span class="t" style="top:149.5px;font-size:12px;line-height:16px;color:#2b2f38;font-weight:bold;letter-spacing:-0.040px;left:876.5px;">Page List</span>
<div class="tabi" style="left:946px;top:147px;width:127px;height:21px;"></div>
<span class="t" style="top:149.5px;font-size:12px;line-height:16px;color:#2b2f38;font-weight:bold;letter-spacing:0.102px;left:962.0px;">Press Sheet List</span>
<div class="tabi" style="left:1073px;top:147px;width:91px;height:21px;"></div>
<span class="t" style="top:149.5px;font-size:12px;line-height:16px;color:#2b2f38;font-weight:bold;letter-spacing:-0.084px;left:1089.5px;">Document</span>
<div style="left:1164px;top:149px;width:4px;height:19px;background:#9aa3b4;border-radius:0 3px 0 0;"></div>
<div style="left:658px;top:178px;width:600px;height:19px;background:#efe468;"></div>
<span class="t" style="top:180.8px;font-size:12px;line-height:16px;color:#000;left:659.6px;">A:</span>
<span class="t" style="top:180.8px;font-size:12px;line-height:16px;color:#000;letter-spacing:0.113px;left:676.7px;">Press Sheet 16 (Sheetwise (front and back))</span>
<div style="left:659px;top:197px;width:600px;height:511px;background:#d4dfef;border-top:1px solid #8f97a7;border-left:1px solid #8f97a7;"></div>
<svg style="left:660px;top:198px" width="594" height="496" viewBox="660 198 594 496" font-family="Liberation Sans,sans-serif" font-size="10"><path d="M685.5 211.5V215 M688.5 211.5V215 M692.5 208V215 M696.5 211.5V215 M700.5 211.5V215 M704.5 211.5V215 M707.5 211.5V215 M711.5 210V215 M715.5 211.5V215 M719.5 211.5V215 M722.5 211.5V215 M726.5 211.5V215 M730.5 208V215 M734.5 211.5V215 M738.5 211.5V215 M741.5 211.5V215 M745.5 211.5V215 M749.5 210V215 M753.5 211.5V215 M756.5 211.5V215 M760.5 211.5V215 M764.5 211.5V215 M768.5 208V215 M772.5 211.5V215 M775.5 211.5V215 M779.5 211.5V215 M783.5 211.5V215 M787.5 210V215 M791.5 211.5V215 M794.5 211.5V215 M798.5 211.5V215 M802.5 211.5V215 M806.5 208V215 M809.5 211.5V215 M813.5 211.5V215 M817.5 211.5V215 M821.5 211.5V215 M825.5 210V215 M828.5 211.5V215 M832.5 211.5V215 M836.5 211.5V215 M840.5 211.5V215 M844.5 208V215 M847.5 211.5V215 M851.5 211.5V215 M855.5 211.5V215 M859.5 211.5V215 M862.5 210V215 M866.5 211.5V215 M870.5 211.5V215 M874.5 211.5V215 M878.5 211.5V215 M881.5 208V215 M885.5 211.5V215 M889.5 211.5V215 M893.5 211.5V215 M897.5 211.5V215 M900.5 210V215 M904.5 211.5V215 M908.5 211.5V215 M912.5 211.5V215 M915.5 211.5V215 M919.5 208V215 M923.5 211.5V215 M927.5 211.5V215 M931.5 211.5V215 M934.5 211.5V215 M938.5 210V215 M942.5 211.5V215 M946.5 211.5V215 M950.5 211.5V215 M953.5 211.5V215 M957.5 208V215 M961.5 211.5V215 M965.5 211.5V215 M968.5 211.5V215 M972.5 211.5V215 M976.5 210V215 M980.5 211.5V215 M984.5 211.5V215 M987.5 211.5V215 M991.5 211.5V215 M995.5 208V215 M999.5 211.5V215 M1003.5 211.5V215 M1006.5 211.5V215 M1010.5 211.5V215 M1014.5 210V215 M1018.5 211.5V215 M1021.5 211.5V215 M1025.5 211.5V215 M1029.5 211.5V215 M1033.5 208V215 M1037.5 211.5V215 M1040.5 211.5V215 M1044.5 211.5V215 M1048.5 211.5V215 M1052.5 210V215 M1056.5 211.5V215 M1059.5 211.5V215 M1063.5 211.5V215 M1067.5 211.5V215 M1071.5 208V215 M1074.5 211.5V215 M1078.5 211.5V215 M1082.5 211.5V215 M1086.5 211.5V215 M1090.5 210V215 M1093.5 211.5V215 M1097.5 211.5V215 M1101.5 211.5V215 M1105.5 211.5V215 M1108.5 208V215 M1112.5 211.5V215 M1116.5 211.5V215 M1120.5 211.5V215 M1124.5 211.5V215 M1127.5 210V215 M1131.5 211.5V215 M1135.5 211.5V215 M1139.5 211.5V215 M1143.5 211.5V215 M1146.5 208V215 M1150.5 211.5V215 M1154.5 211.5V215 M1158.5 211.5V215 M1161.5 211.5V215 M1165.5 210V215 M1169.5 211.5V215 M1173.5 211.5V215 M1177.5 211.5V215 M1180.5 211.5V215 M1184.5 208V215 M1188.5 211.5V215 M1192.5 211.5V215 M1196.5 211.5V215 M1199.5 211.5V215 M1203.5 210V215 M1207.5 211.5V215 M1211.5 211.5V215 M1214.5 211.5V215 M1218.5 211.5V215 M1222.5 208V215 M1226.5 211.5V215 M1230.5 211.5V215 M1233.5 211.5V215 M1237.5 211.5V215 M1241.5 210V215 M1245.5 211.5V215 M1249.5 211.5V215 M1252.5 211.5V215" stroke="#000" stroke-width="1" fill="none"/><text x="700.8" y="207.500" text-anchor="end">55.0</text><text x="727.5" y="207.500" text-anchor="middle">-50.0</text><text x="765.3" y="207.500" text-anchor="middle">-45.0</text><text x="803.2" y="207.500" text-anchor="middle">-40.0</text><text x="841.0" y="207.500" text-anchor="middle">-35.0</text><text x="878.9" y="207.500" text-anchor="middle">-30.0</text><text x="916.8" y="207.500" text-anchor="middle">-25.0</text><text x="954.6" y="207.500" text-anchor="middle">-20.0</text><text x="992.5" y="207.500" text-anchor="middle">-15.0</text><text x="1030.3" y="207.500" text-anchor="middle">-10.0</text><text x="1068.2" y="207.500" text-anchor="middle">-5.0</text><text x="1106.0" y="207.500" text-anchor="middle">0.0</text><text x="1143.8" y="207.500" text-anchor="middle">5.0</text><text x="1181.7" y="207.500" text-anchor="middle">10.0</text><text x="1219.5" y="207.500" text-anchor="middle">15.0</text><text x="1257.4" y="207.500" text-anchor="middle">20.0</text><path d="M674 222.5H677 M674 226.5H677 M674 230.5H677 M672 233.5H677 M674 237.5H677 M674 241.5H677 M674 245.5H677 M674 248.5H677 M670 252.5H677 M674 256.5H677 M674 260.5H677 M674 264.5H677 M674 267.5H677 M672 271.5H677 M674 275.5H677 M674 279.5H677 M674 283.5H677 M674 286.5H677 M670 290.5H677 M674 294.5H677 M674 298.5H677 M674 301.5H677 M674 305.5H677 M672 309.5H677 M674 313.5H677 M674 317.5H677 M674 320.5H677 M674 324.5H677 M670 328.5H677 M674 332.5H677 M674 336.5H677 M674 339.5H677 M674 343.5H677 M672 347.5H677 M674 351.5H677 M674 354.5H677 M674 358.5H677 M674 362.5H677 M670 366.5H677 M674 370.5H677 M674 373.5H677 M674 377.5H677 M674 381.5H677 M672 385.5H677 M674 389.5H677 M674 392.5H677 M674 396.5H677 M674 400.5H677 M670 404.5H677 M674 407.5H677 M674 411.5H677 M674 415.5H677 M674 419.5H677 M672 423.5H677 M674 426.5H677 M674 430.5H677 M674 434.5H677 M674 438.5H677 M670 442.5H677 M674 445.5H677 M674 449.5H677 M674 453.5H677 M674 457.5H677 M672 460.5H677 M674 464.5H677 M674 468.5H677 M674 472.5H677 M674 476.5H677 M670 479.5H677 M674 483.5H677 M674 487.5H677 M674 491.5H677 M674 494.5H677 M672 498.5H677 M674 502.5H677 M674 506.5H677 M674 510.5H677 M674 513.5H677 M670 517.5H677 M674 521.5H677 M674 525.5H677 M674 529.5H677 M674 532.5H677 M672 536.5H677 M674 540.5H677 M674 544.5H677 M674 547.5H677 M674 551.5H677 M670 555.5H677 M674 559.5H677 M674 563.5H677 M674 566.5H677 M674 570.5H677 M672 574.5H677 M674 578.5H677 M674 582.5H677 M674 585.5H677 M674 589.5H677 M670 593.5H677 M674 597.5H677 M674 600.5H677 M674 604.5H677 M674 608.5H677 M672 612.5H677 M674 616.5H677 M674 619.5H677 M674 623.5H677 M674 627.5H677 M670 631.5H677 M674 635.5H677 M674 638.5H677 M674 642.5H677 M674 646.5H677 M672 650.5H677 M674 653.5H677 M674 657.5H677 M674 661.5H677 M674 665.5H677 M670 669.5H677 M674 672.5H677 M674 676.5H677 M674 680.5H677 M674 684.5H677 M672 688.5H677 M674 691.5H677" stroke="#000" stroke-width="1" fill="none"/><text transform="translate(668.500 216.6) rotate(-90)" text-anchor="middle">30.0</text><text transform="translate(668.500 254.4) rotate(-90)" text-anchor="middle">25.0</text><text transform="translate(668.500 292.3) rotate(-90)" text-anchor="middle">20.0</text><text transform="translate(668.500 330.1) rotate(-90)" text-anchor="middle">15.0</text><text transform="translate(668.500 368.0) rotate(-90)" text-anchor="middle">10.0</text><text transform="translate(668.500 405.8) rotate(-90)" text-anchor="middle">5.0</text><text transform="translate(668.500 443.7) rotate(-90)" text-anchor="middle">0.0</text><text transform="translate(668.500 481.6) rotate(-90)" text-anchor="middle">-5.0</text><text transform="translate(668.500 519.4) rotate(-90)" text-anchor="middle">-10.0</text><text transform="translate(668.500 557.2) rotate(-90)" text-anchor="middle">-15.0</text><text transform="translate(668.500 595.1) rotate(-90)" text-anchor="middle">-20.0</text><text transform="translate(668.500 633.0) rotate(-90)" text-anchor="middle">-25.0</text><text transform="translate(668.500 670.8) rotate(-90)" text-anchor="middle">-30.0</text></svg>
<div style="left:660px;top:198px;width:20px;height:20px;background:#c4c4c4;border:1px solid #fff;outline:1px solid #8f97a7;outline-offset:-2px;"></div>
<div style="left:660px;top:198px;width:20px;height:20px;background:transparent;border:1px solid #f4f7fb;"></div>
<svg style="left:661px;top:199px" width="18" height="18"><path d="M9 1v16M1 9h16" stroke="#000" stroke-width="1.600"/></svg>
<svg style="left:1105px;top:197px" width="8" height="20"><circle cx="4" cy="1.500" r="1.300" fill="#000"/><circle cx="4" cy="17.500" r="1.100" fill="#000"/></svg>
<svg style="left:660px;top:438px" width="20" height="8"><circle cx="1.800" cy="4" r="1.300" fill="#000"/><circle cx="17" cy="4" r="1.100" fill="#000"/></svg>
<svg style="left:680px;top:218px" width="574" height="475" viewBox="680 218 574 475" font-family="Liberation Sans,Noto Sans CJK JP,sans-serif"><rect x="680" y="218" width="574" height="475" fill="#f0f0f0"/><rect x="680" y="218" width="89" height="475" fill="#f6f6f6"/><rect x="769" y="218" width="37" height="475" fill="#d8d8d8"/><rect x="806" y="567" width="448" height="76" fill="#d89898"/><rect x="806" y="643" width="448" height="50" fill="#d8d8d8"/><rect x="806" y="565" width="448" height="2" fill="#0000ff"/><rect x="1071" y="210" width="200" height="270" fill="#c4c4c4" stroke="#00ff00" stroke-width="2"/><rect x="1136.500" y="210" width="200" height="232" fill="#909090" stroke="#000" stroke-width="1"/><text transform="translate(1162.800 412) scale(0.99 1.10)" font-size="372" font-weight="bold" fill="#fff" stroke="#000" stroke-width="1">3</text><path d="M1202 217L1223.600 220.800L1224.600 217z" fill="#fff" stroke="#000" stroke-width=".8"/><rect x="1097" y="439" width="19" height="5" fill="#fff"/><rect x="1098" y="440.800" width="16.500" height="1.400" fill="#111"/><rect x="1134" y="463" width="5" height="18" fill="#fff"/><rect x="1135.800" y="464" width="1.400" height="16" fill="#111"/><rect x="1109" y="218" width="1" height="475" fill="#0000ff"/><path d="M769.500 212V693" stroke="#0000ff" stroke-width="1" stroke-dasharray="20 20" fill="none"/><text transform="translate(732.500 495.500) rotate(-90) scale(1 1.05)" font-size="58.700" fill="#ff0000" stroke="#ff0000" stroke-width="0.900">Gripper Ma</text><rect x="741" y="218" width="3" height="475" fill="#ff0000"/><path d="M729.500 509H755.500L742.500 561z" fill="#ff0000"/><path d="M742.500 643L755.200 697H729.800z" fill="#ff0000"/><path d="M679.500 658L688 697H679.500z" fill="#ff0000"/><rect x="714" y="567" width="81" height="3" fill="#800000"/><rect x="679" y="641" width="116" height="3" fill="#800000"/><rect x="805" y="654" width="3" height="40" fill="#800000"/><text transform="translate(829 551) rotate(-90)" font-size="16" fill="#000">Лист: 16 ※ Сторона: A (Sheetwise (front and back))</text><text x="822" y="627.500" font-size="16" fill="#000" textLength="309" lengthAdjust="spacing">Бумага: 500.0 x 350.0 ※ Цвета: $[color all]</text></svg>
<div style="left:680px;top:693px;width:580px;height:14px;background:#becadd;border:1px solid #9aa3b4;"></div>
<div style="left:754px;top:693px;width:294px;height:14px;background:#e3e9f5;border:1px solid #9aa3b4;"></div>
<div style="left:897px;top:697px;width:1px;height:6px;background:#7f8796;"></div>
<div style="left:899px;top:697px;width:1px;height:6px;background:#7f8796;"></div>
<div style="left:901px;top:697px;width:1px;height:6px;background:#7f8796;"></div>
<div style="left:903px;top:697px;width:1px;height:6px;background:#7f8796;"></div>
<div style="left:680px;top:693px;width:15px;height:14px;background:#e3e9f5;border:1px solid #8a93a4;border-radius:2px;"></div>
<svg style="left:685px;top:696px" width="5" height="9"><path d="M5 0v9l-5-4.500z" fill="#000"/></svg>
<div style="left:659px;top:707px;width:600px;height:1px;background:#f4f7fb;"></div>
<span class="t" style="top:721.5px;font-size:12px;line-height:16px;color:#111;left:657px;">X:</span>
<div class="inp" style="left:676px;top:718.5px;width:80px;height:20px;"></div>
<span class="t" style="top:722.0px;font-size:12px;line-height:16px;color:#000;left:683px;">-56.23</span>
<span class="t" style="top:721.5px;font-size:12px;line-height:16px;color:#111;left:766px;">Y:</span>
<div class="inp" style="left:782px;top:718.5px;width:79px;height:20px;"></div>
<span class="t" style="top:722.0px;font-size:12px;line-height:16px;color:#000;left:789px;">-10.1</span>
<span class="t" style="top:750.0px;font-size:12px;line-height:16px;color:#111;left:657px;">W:</span>
<div class="inp" style="left:676px;top:747px;width:80px;height:20px;"></div>
<span class="t" style="top:750.5px;font-size:12px;line-height:16px;color:#000;left:683px;">0.0</span>
<span class="t" style="top:750.0px;font-size:12px;line-height:16px;color:#111;left:766px;">H:</span>
<div class="inp" style="left:782px;top:747px;width:79px;height:20px;"></div>
<span class="t" style="top:750.5px;font-size:12px;line-height:16px;color:#000;left:789px;">0.0</span>
<div style="left:878px;top:717px;width:20px;height:20px;background:#bdc9dc;border:1px solid #8a93a4;border-right-color:#f4f7fb;border-bottom-color:#f4f7fb;"></div>
<div class="btn" style="left:903px;top:717px;width:20px;height:20px;"></div>
<div class="btn" style="left:928px;top:717px;width:20px;height:20px;"></div>
<div class="btn" style="left:953px;top:717px;width:20px;height:20px;"></div>
<div class="btn" style="left:978px;top:717px;width:20px;height:20px;"></div>
<div class="btn" style="left:1003px;top:717px;width:20px;height:20px;"></div>
<div class="btn" style="left:1028px;top:717px;width:20px;height:20px;"></div>
<svg style="left:876px;top:715px" width="176" height="24" viewBox="876 715 176 24"><path d="M880.900 719.800L895.500 727L887.900 734.200z" fill="#50555f"/><path d="M912.800 727.300l7 7" stroke="#4a4f59" stroke-width="2.600"/><path d="M913.300 727.800l6 6" stroke="#dfe4ee" stroke-width=".9"/><circle cx="909.700" cy="724" r="4.400" fill="#fbfcfe" stroke="#4a4f59" stroke-width="1.100"/><path d="M935.400 727v3.200l-1.400-2.300q-1-1-1.800-.1q.9 3.600 3.300 6.500h6.500q1.200-1.700 1.200-4v-3.300z" fill="#eef1f8" stroke="#4a4f59" stroke-width=".9" stroke-linejoin="round"/><path d="M935.4 729V721.6q.9-1.200 1.800 0V729M937.4 729V720.1q.9-1.200 1.800 0V729M939.4 729V720.6q.9-1.200 1.800 0V729M941.4 729V722.6q.9-1.200 1.800 0V729" fill="#eef1f8" stroke="#4a4f59" stroke-width=".9"/><path d="M935.900 729.500h6.800" stroke="#eef1f8" stroke-width="1.400"/><path d="M956.400 722.900H970V733.500H958.600V721.400" fill="none" stroke="#4a4f59" stroke-width="1.100"/><path d="M983.500 722.300l9 9M992.500 722.300l-9 9" stroke="#4a4f59" stroke-width="2.200"/><path d="M981.300 720.200h4.600l-4.600 4.600zM994.700 733.400h-4.600l4.600-4.600z" fill="#4a4f59"/><path d="M1013 719.500l-3.600 9.500h2.300l-.9 3.500h4.400l-.9-3.500h2.300z" fill="#30333a"/><path d="M1011 732.500h4v2.200h-4z" fill="#30333a"/><path d="M1006.500 719.500l2.300.2-2 2z" fill="#30333a"/><path d="M1008.700 722.100l11.400 9.900M1019.300 722.100l-11 10.600" stroke="#ee1c24" stroke-width="1.900"/><path d="M1031.400 720.600v13.600M1044.500 720.600v13.600M1033 728.500h10" fill="none" stroke="#4a4f59" stroke-width="1.100"/><path d="M1032.500 728.500l3.300-2v4zM1043.500 728.500l-3.300-2v4z" fill="#4a4f59"/></svg>
<div class="inp" style="left:878px;top:747px;width:108px;height:20px;background:#bdc9dc;"></div>
<span class="t" style="top:750.5px;font-size:12px;line-height:16px;color:#000;left:881px;">266%</span>
<div style="left:970px;top:748px;width:15px;height:18px;background:#e3e9f5;border:1px solid #8a93a4;border-radius:2px;"></div>
<svg style="left:973px;top:755px" width="9" height="5"><path d="M0 0h9l-4.500 5z" fill="#000"/></svg>
<div class="inp" style="left:998px;top:747px;width:108px;height:20px;"></div>
<span class="t" style="top:750.5px;font-size:12px;line-height:16px;color:#000;letter-spacing:0.281px;left:1005px;">Colored</span>
<div style="left:1090px;top:748px;width:15px;height:18px;background:#e3e9f5;border:1px solid #8a93a4;border-radius:2px;"></div>
<svg style="left:1093px;top:755px" width="9" height="5"><path d="M0 0h9l-4.500 5z" fill="#000"/></svg>
<div style="left:646px;top:784px;width:620px;height:1px;background:#f4f7fb;"></div>
<div style="left:646px;top:786px;width:620px;height:1px;background:#8f97a7;"></div>
<svg style="left:1230px;top:781px" width="8" height="5"><path d="M0 5h8l-4-5z" fill="#6d7482"/></svg>
<div style="left:649px;top:798px;width:620px;height:20px;background:#00387b;"></div>
<span class="t" style="top:800.8px;font-size:12px;line-height:16px;color:#fff;letter-spacing:0.131px;left:651px;">unnamed unnamed /Product Part: A</span>
<div style="left:652px;top:846px;width:653px;height:158px;background:#9aa3b4;border-radius:0 4px 3px 3px;"></div>
<div style="left:651px;top:845px;width:652px;height:157px;background:#a9b2c3;border-radius:0 4px 3px 3px;"></div>
<div style="left:649px;top:843px;width:651px;height:157px;background:#d4dfef;border-top:1px solid #fff;border-left:1px solid #eef3fa;border-radius:0 3px 2px 2px;"></div>
<div style="left:650px;top:843px;width:102px;height:1px;background:#d4dfef;"></div>
<div style="left:649px;top:818px;width:103px;height:26px;background:#d4dfef;border-left:1px solid #fff;border-top:1px solid #eef3fa;"></div>
<span class="t" style="top:824.5px;font-size:12px;line-height:16px;color:#0b3680;font-weight:bold;letter-spacing:0.207px;left:665.0px;">Press Sheet</span>
<div class="tabi" style="left:753px;top:822px;width:107px;height:21px;"></div>
<span class="t" style="top:824.5px;font-size:12px;line-height:16px;color:#2b2f38;font-weight:bold;letter-spacing:-0.180px;left:768.0px;">Folding Sheet</span>
<div class="tabi" style="left:860px;top:822px;width:87px;height:21px;"></div>
<span class="t" style="top:824.5px;font-size:12px;line-height:16px;color:#2b2f38;font-weight:bold;letter-spacing:-0.040px;left:877.0px;">Page List</span>
<div class="tabi" style="left:947px;top:822px;width:85px;height:21px;"></div>
<span class="t" style="top:824.5px;font-size:12px;line-height:16px;color:#2b2f38;font-weight:bold;letter-spacing:-0.127px;left:963.0px;">Assigned</span>
<div class="tabi" style="left:1032px;top:822px;width:108px;height:21px;"></div>
<span class="t" style="top:824.5px;font-size:12px;line-height:16px;color:#2b2f38;font-weight:bold;letter-spacing:-0.113px;left:1049.0px;">Not assigned</span>
<div style="left:1140px;top:824px;width:4px;height:19px;background:#9aa3b4;border-radius:0 3px 0 0;"></div>
<div style="left:659px;top:853px;width:600px;height:140px;border-left:1px solid #7f8796;border-top:1px solid #7f8796;"></div>
<div style="left:746px;top:857px;width:600px;height:21px;background:#d4dfef;"></div>
<div style="left:660px;top:857px;width:86px;height:21px;background:#d7e1f0;"></div>
<div style="left:746px;top:878px;width:600px;height:21px;background:#cbd6e6;"></div>
<div style="left:660px;top:878px;width:86px;height:21px;background:#d7e1f0;"></div>
<div style="left:746px;top:899px;width:600px;height:21px;background:#d4dfef;"></div>
<div style="left:660px;top:899px;width:86px;height:21px;background:#d7e1f0;"></div>
<div style="left:746px;top:920px;width:600px;height:21px;background:#cbd6e6;"></div>
<div style="left:660px;top:920px;width:86px;height:21px;background:#d7e1f0;"></div>
<div style="left:746px;top:941px;width:600px;height:21px;background:#d4dfef;"></div>
<div style="left:660px;top:941px;width:86px;height:21px;background:#d7e1f0;"></div>
<div style="left:746px;top:962px;width:600px;height:21px;background:#cbd6e6;"></div>
<div style="left:660px;top:962px;width:86px;height:21px;background:#d7e1f0;"></div>
<div style="left:746px;top:983px;width:600px;height:21px;background:#d4dfef;"></div>
<div style="left:660px;top:983px;width:86px;height:21px;background:#d7e1f0;"></div>
<div style="left:660px;top:854px;width:600px;height:20px;background:#d4dfef;"></div>
<div style="left:660px;top:873px;width:600px;height:1px;background:#7f8796;"></div>
<div style="left:660px;top:877px;width:600px;height:1px;background:#7f8796;"></div>
<div style="left:660px;top:898px;width:600px;height:1px;background:#7f8796;"></div>
<div style="left:660px;top:919px;width:600px;height:1px;background:#7f8796;"></div>
<div style="left:660px;top:940px;width:600px;height:1px;background:#7f8796;"></div>
<div style="left:660px;top:961px;width:600px;height:1px;background:#7f8796;"></div>
<div style="left:660px;top:982px;width:600px;height:1px;background:#7f8796;"></div>
<div style="left:660px;top:874px;width:600px;height:3px;background:#d4dfef;"></div>
<div style="left:745px;top:854px;width:1px;height:140px;background:#7f8796;"></div>
<div style="left:1063px;top:854px;width:1px;height:140px;background:#7f8796;"></div>
<div style="left:1143px;top:854px;width:1px;height:140px;background:#7f8796;"></div>
<span class="t" style="top:855.5px;font-size:12px;line-height:16px;color:#22252c;font-weight:bold;left:692.3px;">No.</span>
<span class="t" style="top:855.5px;font-size:12px;line-height:16px;color:#22252c;font-weight:bold;left:869.6px;">Sheet Name</span>
<span class="t" style="top:855.5px;font-size:12px;line-height:16px;color:#22252c;font-weight:bold;left:1082.7px;">Format</span>
<span class="t" style="top:855.5px;font-size:12px;line-height:16px;color:#22252c;font-weight:bold;letter-spacing:-0.257px;left:1177.5px;">Folding Sheet</span>
<span class="t" style="top:880.5px;font-size:11px;line-height:15px;color:#333;left:663px;">+</span>
<svg style="left:670px;top:881.5px" width="16" height="14" viewBox="0 0 16 14"><rect x="0.500" y="0.500" width="14" height="12" fill="#eef2f8" stroke="#555"/><path d="M0 13h15.500" stroke="#444" stroke-width="1.500"/><rect x="2.500" y="2.500" width="4" height="6" fill="#c8ccd6" stroke="#555"/><rect x="8.500" y="2.500" width="4" height="6" fill="#c8ccd6" stroke="#555"/><path d="M4.500 4v3M10.500 4v3" stroke="#fff"/></svg>
<span class="t" style="top:880.5px;font-size:12px;line-height:16px;color:#111;left:689px;">5</span>
<span class="t" style="top:880.5px;font-size:12px;line-height:16px;color:#333;letter-spacing:0.132px;left:753px;">Press Sheet 5 (Sheetwise (front and back))</span>
<span class="t" style="top:880.5px;font-size:12px;line-height:16px;color:#333;letter-spacing:-0.126px;left:1071px;">510.0x40...</span>
<span class="t" style="top:880.5px;font-size:12px;line-height:16px;color:#333;letter-spacing:0.019px;left:1151px;">5(2x1.2stor.1f)</span>
<span class="t" style="top:901.5px;font-size:11px;line-height:15px;color:#333;left:663px;">+</span>
<svg style="left:670px;top:902.5px" width="16" height="14" viewBox="0 0 16 14"><rect x="0.500" y="0.500" width="14" height="12" fill="#eef2f8" stroke="#555"/><path d="M0 13h15.500" stroke="#444" stroke-width="1.500"/><rect x="2.500" y="2.500" width="4" height="6" fill="#c8ccd6" stroke="#555"/><rect x="8.500" y="2.500" width="4" height="6" fill="#c8ccd6" stroke="#555"/><path d="M4.500 4v3M10.500 4v3" stroke="#fff"/></svg>
<span class="t" style="top:901.5px;font-size:12px;line-height:16px;color:#111;left:689px;">6</span>
<span class="t" style="top:901.5px;font-size:12px;line-height:16px;color:#333;letter-spacing:0.132px;left:753px;">Press Sheet 6 (Sheetwise (front and back))</span>
<span class="t" style="top:901.5px;font-size:12px;line-height:16px;color:#333;letter-spacing:-0.126px;left:1071px;">510.0x40...</span>
<span class="t" style="top:901.5px;font-size:12px;line-height:16px;color:#333;letter-spacing:0.019px;left:1151px;">6(2x1.2stor.1f)</span>
<span class="t" style="top:922.5px;font-size:11px;line-height:15px;color:#333;left:663px;">+</span>
<svg style="left:670px;top:923.5px" width="16" height="14" viewBox="0 0 16 14"><rect x="0.500" y="0.500" width="14" height="12" fill="#eef2f8" stroke="#555"/><path d="M0 13h15.500" stroke="#444" stroke-width="1.500"/><rect x="2.500" y="2.500" width="4" height="6" fill="#c8ccd6" stroke="#555"/><rect x="8.500" y="2.500" width="4" height="6" fill="#c8ccd6" stroke="#555"/><path d="M4.500 4v3M10.500 4v3" stroke="#fff"/></svg>
<span class="t" style="top:922.5px;font-size:12px;line-height:16px;color:#111;left:689px;">7</span>
<span class="t" style="top:922.5px;font-size:12px;line-height:16px;color:#333;letter-spacing:0.132px;left:753px;">Press Sheet 7 (Sheetwise (front and back))</span>
<span class="t" style="top:922.5px;font-size:12px;line-height:16px;color:#333;letter-spacing:-0.126px;left:1071px;">510.0x40...</span>
<span class="t" style="top:922.5px;font-size:12px;line-height:16px;color:#333;letter-spacing:0.019px;left:1151px;">7(2x1.2stor.1f)</span>
<span class="t" style="top:943.5px;font-size:11px;line-height:15px;color:#333;left:663px;">+</span>
<svg style="left:670px;top:944.5px" width="16" height="14" viewBox="0 0 16 14"><rect x="0.500" y="0.500" width="14" height="12" fill="#eef2f8" stroke="#555"/><path d="M0 13h15.500" stroke="#444" stroke-width="1.500"/><rect x="2.500" y="2.500" width="4" height="6" fill="#c8ccd6" stroke="#555"/><rect x="8.500" y="2.500" width="4" height="6" fill="#c8ccd6" stroke="#555"/><path d="M4.500 4v3M10.500 4v3" stroke="#fff"/></svg>
<span class="t" style="top:943.5px;font-size:12px;line-height:16px;color:#111;left:689px;">8</span>
<span class="t" style="top:943.5px;font-size:12px;line-height:16px;color:#333;letter-spacing:0.132px;left:753px;">Press Sheet 8 (Sheetwise (front and back))</span>
<span class="t" style="top:943.5px;font-size:12px;line-height:16px;color:#333;letter-spacing:-0.126px;left:1071px;">510.0x40...</span>
<span class="t" style="top:943.5px;font-size:12px;line-height:16px;color:#333;letter-spacing:0.019px;left:1151px;">8(2x1.2stor.1f)</span>
<span class="t" style="top:964.5px;font-size:11px;line-height:15px;color:#333;left:663px;">+</span>
<svg style="left:670px;top:965.5px" width="16" height="14" viewBox="0 0 16 14"><rect x="0.500" y="0.500" width="14" height="12" fill="#eef2f8" stroke="#555"/><path d="M0 13h15.500" stroke="#444" stroke-width="1.500"/><rect x="2.500" y="2.500" width="4" height="6" fill="#c8ccd6" stroke="#555"/><rect x="8.500" y="2.500" width="4" height="6" fill="#c8ccd6" stroke="#555"/><path d="M4.500 4v3M10.500 4v3" stroke="#fff"/></svg>
<span class="t" style="top:964.5px;font-size:12px;line-height:16px;color:#111;left:689px;">9</span>
<span class="t" style="top:964.5px;font-size:12px;line-height:16px;color:#333;letter-spacing:0.132px;left:753px;">Press Sheet 9 (Sheetwise (front and back))</span>
<span class="t" style="top:964.5px;font-size:12px;line-height:16px;color:#333;letter-spacing:-0.126px;left:1071px;">510.0x40...</span>
<span class="t" style="top:964.5px;font-size:12px;line-height:16px;color:#333;letter-spacing:0.019px;left:1151px;">9(2x1.2stor.1f)</span>
</div>
</body></html>
